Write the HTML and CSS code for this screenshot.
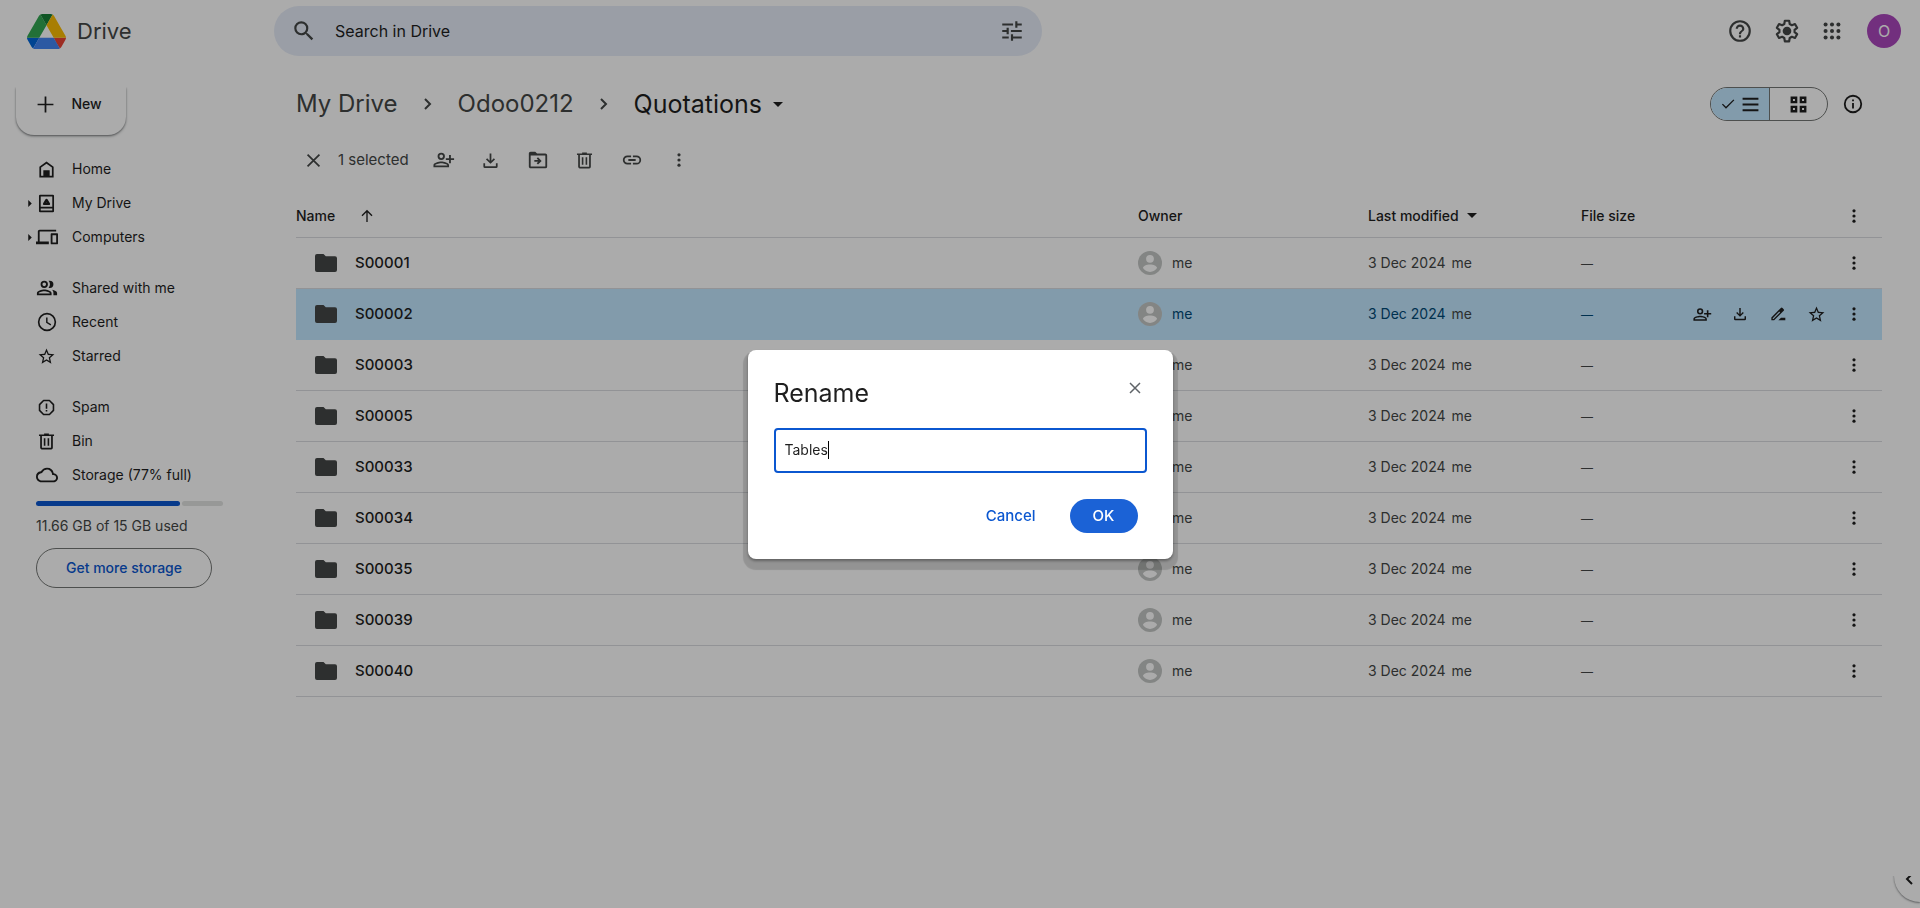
FILE: index.html
```html
<!DOCTYPE html>
<html lang="en">

<head>
    <meta charset="UTF-8">
    <meta name="viewport" content="width=device-width, initial-scale=1.0">
    <title>Quotations - Google Drive</title>
    <link rel="stylesheet" href="styles.css">
</head>

<body>
    <!-- Icon sprite -->
    <svg class="sprite" aria-hidden="true">
        <symbol id="i-search" viewBox="0 0 24 24"><path d="M15.5 14h-.79l-.28-.27A6.47 6.47 0 0 0 16 9.5 6.5 6.5 0 1 0 9.5 16c1.61 0 3.09-.59 4.23-1.57l.27.28v.79l5 4.99L20.49 19l-4.99-5zm-6 0a4.5 4.5 0 1 1 0-9 4.5 4.5 0 0 1 0 9z"/></symbol>
        <symbol id="i-tune" viewBox="0 0 24 24"><path d="M3 17v2h6v-2H3zM3 5v2h10V5H3zm10 16v-2h8v-2h-8v-2h-2v6h2zM7 9v2H3v2h4v2h2V9H7zm14 4v-2H11v2h10zm-6-4h2V7h4V5h-4V3h-2v6z"/></symbol>
        <symbol id="i-help" viewBox="0 0 24 24"><path d="M11 18h2v-2h-2v2zm1-16a10 10 0 1 0 0 20 10 10 0 0 0 0-20zm0 18a8 8 0 1 1 0-16 8 8 0 0 1 0 16zm0-14a4 4 0 0 0-4 4h2a2 2 0 1 1 4 0c0 2-3 1.750-3 5h2c0-2.250 3-2.500 3-5a4 4 0 0 0-4-4z"/></symbol>
        <symbol id="i-gear" viewBox="0 0 24 24"><path fill="none" stroke="currentColor" stroke-width="2" stroke-linejoin="round" d="M10 2.500h4l.5 3 2 1.150 2.850-1.050 2 3.450-2.350 1.900v2.100l2.350 1.900-2 3.450-2.850-1.050-2 1.150-.5 3h-4l-.5-3-2-1.150-2.850 1.050-2-3.450L5 13.050v-2.100L2.650 9.050l2-3.450L7.500 6.650l2-1.150z"/><circle cx="12" cy="12" r="4"/></symbol>
        <symbol id="i-apps" viewBox="0 0 24 24"><circle cx="5" cy="5" r="2.200"/><circle cx="12" cy="5" r="2.200"/><circle cx="19" cy="5" r="2.200"/><circle cx="5" cy="12" r="2.200"/><circle cx="12" cy="12" r="2.200"/><circle cx="19" cy="12" r="2.200"/><circle cx="5" cy="19" r="2.200"/><circle cx="12" cy="19" r="2.200"/><circle cx="19" cy="19" r="2.200"/></symbol>
        <symbol id="i-plus" viewBox="0 0 24 24"><path d="M10.900 2h2.200v8.900H22v2.200h-8.900V22h-2.200v-8.900H2v-2.200h8.900z"/></symbol>
        <symbol id="i-home" viewBox="0 0 24 24"><path fill-rule="evenodd" d="M12 2 3 8.500V22h18V8.500L12 2zM5.200 19.800V9.600L12 4.700l6.800 4.900v10.200H16V13H8v6.800z"/></symbol>
        <symbol id="i-drive" viewBox="0 0 24 24"><path fill-rule="evenodd" d="M4 1h16a1.500 1.500 0 0 1 1.500 1.500v19A1.500 1.500 0 0 1 20 23H4a1.500 1.500 0 0 1-1.500-1.500v-19A1.500 1.500 0 0 1 4 1zm.7 2.200v13h14.600v-13zm0 15.200v2.400h14.600v-2.400z"/><path fill="none" stroke="currentColor" stroke-width="3" stroke-linejoin="round" d="m12 7.500-3 5h6z"/></symbol>
        <symbol id="i-devices" viewBox="0 0 24 24"><path d="M4 6h18V4H4c-1.100 0-2 .9-2 2v11H0v3h14v-3H4V6zm19 2h-6c-.55 0-1 .45-1 1v10c0 .55.45 1 1 1h6c.55 0 1-.45 1-1V9c0-.55-.45-1-1-1zm-1 10h-4v-8h4v8z"/></symbol>
        <symbol id="i-people" viewBox="0 0 24 24"><path d="M9 12a4 4 0 1 0 0-8 4 4 0 0 0 0 8zm0-6a2 2 0 1 1 0 4 2 2 0 0 1 0-4zm0 7.500c-2.700 0-8 1.350-8 4V20h16v-2.500c0-2.650-5.300-4-8-4zM15 18H3v-.5c0-.7 3-2 6-2s6 1.300 6 2zM15 12a4 4 0 0 0 0-8c-.5 0-.9.080-1.300.2a6 6 0 0 1 0 7.600c.4.120.8.200 1.300.2zM17.500 13.900c1 .9 1.500 2 1.500 3.600V20h4v-2.500c0-2-2.700-3.100-5.500-3.600z"/></symbol>
        <symbol id="i-clock" viewBox="0 0 24 24"><path d="M12 2a10 10 0 1 0 0 20 10 10 0 0 0 0-20zm0 18.200a8.200 8.200 0 1 1 0-16.400 8.200 8.200 0 0 1 0 16.400zM12.600 7H11v5.800l4.800 3 .8-1.300-4-2.500z"/></symbol>
        <symbol id="i-star" viewBox="0 0 24 24"><path d="m22 9.240-7.190-.62L12 2 9.190 8.630 2 9.240l5.460 4.730L5.820 21 12 17.270 18.180 21l-1.630-7.030L22 9.240zM12 15.400l-3.760 2.270 1-4.280-3.320-2.880 4.380-.38L12 6.100l1.710 4.040 4.380.38-3.320 2.880 1 4.280L12 15.400z"/></symbol>
        <symbol id="i-spam" viewBox="0 0 24 24"><path fill="none" stroke="currentColor" stroke-width="2" stroke-linejoin="round" d="M8.300 3.200h7.400l5.100 5.100v7.400l-5.100 5.100H8.300l-5.100-5.100V8.300z"/><path d="M11 7h2v6.500h-2zM11 15h2v2h-2z"/></symbol>
        <symbol id="i-bin" viewBox="0 0 24 24"><path fill-rule="evenodd" d="M15 3V2H9v1H2.500v2.200H4V20c0 1.100.9 2 2 2h12a2 2 0 0 0 2-2V5.200h1.500V3zm2.800 16.800H6.200V5.200h11.600zM8.600 8h2v9.500h-2zm4.800 0h2v9.500h-2z"/></symbol>
        <symbol id="i-cloud" viewBox="0 0 24 24"><path d="M19.350 10.040A7.490 7.490 0 0 0 12 4C9.110 4 6.600 5.640 5.350 8.040A5.994 5.994 0 0 0 0 14c0 3.310 2.690 6 6 6h13c2.760 0 5-2.240 5-5 0-2.640-2.050-4.780-4.650-4.960zM19 18H6c-2.210 0-4-1.790-4-4 0-2.050 1.530-3.760 3.560-3.970l1.070-.11.5-.95A5.469 5.469 0 0 1 12 6c2.620 0 4.880 1.860 5.390 4.430l.3 1.500 1.530.11A2.980 2.980 0 0 1 22 15c0 1.650-1.350 3-3 3z"/></symbol>
        <symbol id="i-close" viewBox="0 0 24 24"><path fill="none" stroke="currentColor" stroke-width="2.200" d="m4.500 4.500 15 15m0-15-15 15"/></symbol>
        <symbol id="i-share" viewBox="0 0 24 24"><path d="M9 12a4 4 0 1 0 0-8 4 4 0 0 0 0 8zm0-6a2 2 0 1 1 0 4 2 2 0 0 1 0-4zm0 7.500c-2.700 0-8.500 1.350-8.500 4V20h17v-2.500c0-2.650-5.800-4-8.500-4zM15.500 18h-13v-.5c0-.7 3.500-2 6.500-2s6.500 1.300 6.500 2zM19.500 10V6.500h-2V10H14v2h3.500v3.500h2V12H23v-2z"/></symbol>
        <symbol id="i-download" viewBox="0 0 24 24"><path d="M10.900 3h2.200v9.200l3.100-3.100 1.500 1.500L12 16.200l-5.700-5.600 1.500-1.500 3.100 3.100zM3 15.500h2.200v3.800h13.600v-3.800H21V19.500a2 2 0 0 1-2 2H5a2 2 0 0 1-2-2z"/></symbol>
        <symbol id="i-move" viewBox="0 0 24 24"><path fill-rule="evenodd" d="M20 5h-9L9 3H4c-1.100 0-2 .9-2 2v14c0 1.100.9 2 2 2h16a2 2 0 0 0 2-2V7a2 2 0 0 0-2-2zm0 14H4V7h16zm-8-2 4-4-4-4-1.400 1.400 1.600 1.600H8v2h4.200l-1.600 1.600z"/></symbol>
        <symbol id="i-link" viewBox="0 0 24 24"><path d="M3.900 12c0-1.710 1.390-3.100 3.100-3.100h4V7H7a5 5 0 0 0 0 10h4v-1.900H7c-1.710 0-3.100-1.390-3.100-3.100zM8 13h8v-2H8v2zm9-6h-4v1.900h4a3.100 3.100 0 0 1 0 6.200h-4V17h4a5 5 0 0 0 0-10z"/></symbol>
        <symbol id="i-more" viewBox="0 0 24 24"><circle cx="12" cy="4.200" r="2.400"/><circle cx="12" cy="12" r="2.400"/><circle cx="12" cy="19.800" r="2.400"/></symbol>
        <symbol id="i-edit" viewBox="0 0 24 24"><path fill-rule="evenodd" d="M2 17.250V21.500h4.200L20.500 7.200a1.800 1.800 0 0 0 0-2.500l-1.700-1.700a1.800 1.800 0 0 0-2.500 0zM5.300 19.400H4.100v-1.200l9.800-9.800 1.200 1.200z"/><path d="m12.500 21.500 4-4H23v4z"/></symbol>
        <symbol id="i-up" viewBox="0 0 24 24"><path fill="none" stroke="currentColor" stroke-width="2" d="M12 21V4M4.500 11.500 12 4l7.500 7.500"/></symbol>
        <symbol id="i-caret" viewBox="0 0 10 5"><path d="M0 0h10L5 5z"/></symbol>
        <symbol id="i-expand" viewBox="0 0 5 10"><path d="M0 0v10l5-5z"/></symbol>
        <symbol id="i-chevron" viewBox="0 0 8 12"><path fill="none" stroke="currentColor" stroke-width="2" d="m1 1 5 5-5 5"/></symbol>
        <symbol id="i-chevron-left" viewBox="0 0 8 12"><path fill="none" stroke="currentColor" stroke-width="2" d="M7 1 2 6l5 5"/></symbol>
        <symbol id="i-check" viewBox="0 0 24 24"><path d="M9 16.200 4.300 11.500 2.900 12.900 9 19 21.500 6.500 20.100 5.100z"/></symbol>
        <symbol id="i-list" viewBox="0 0 24 24"><path d="M2 3.500h20v2.500H2zM2 10.750h20v2.500H2zM2 18h20v2.500H2z"/></symbol>
        <symbol id="i-grid" viewBox="0 0 24 24"><path fill-rule="evenodd" d="M2 2h8.500v8.500H2zm3 3v2.500h2.500V5zM13.500 2H22v8.500h-8.500zm3 3v2.500H19V5zM2 13.500h8.500V22H2zm3 3V19h2.500v-2.500zM13.500 13.500H22V22h-8.500zm3 3V19H19v-2.500z"/></symbol>
        <symbol id="i-info" viewBox="0 0 24 24"><path d="M11 7h2v2h-2zm0 4h2v6h-2zm1-9a10 10 0 1 0 0 20 10 10 0 0 0 0-20zm0 18a8 8 0 1 1 0-16 8 8 0 0 1 0 16z"/></symbol>
        <symbol id="i-folder" viewBox="0 0 22 18"><path d="M2 0h6.500l2.300 2.300H20a2 2 0 0 1 2 2V16a2 2 0 0 1-2 2H2a2 2 0 0 1-2-2V2a2 2 0 0 1 2-2z"/></symbol>
        <symbol id="i-user" viewBox="0 0 24 24"><circle cx="12" cy="12" r="12" fill="#c4c7c5"/><circle cx="12" cy="7.800" r="3.900" fill="#fff"/><path fill="#fff" d="M12 13.600c-3.600 0-7 1.600-7 3.500 1.400 2.300 4 3.900 7 3.900s5.600-1.600 7-3.900c0-1.900-3.400-3.500-7-3.500z"/></symbol>
    </svg>

    <!-- Top bar -->
    <header class="topbar">
        <a class="brand" href="#">
            <svg class="logo" viewBox="0 0 87.3 78" aria-hidden="true">
                <path d="m6.600 66.850 3.850 6.650c.8 1.400 1.950 2.500 3.300 3.300L27.500 53H0c0 1.550.4 3.100 1.200 4.500z" fill="#0066da"/>
                <path d="M43.650 25 29.900 1.200c-1.350.8-2.500 1.900-3.300 3.300l-25.400 44A9.060 9.060 0 0 0 0 53h27.500z" fill="#34a853"/>
                <path d="M73.550 76.800c1.350-.8 2.500-1.900 3.300-3.300l1.600-2.750L86.100 57.500c.8-1.400 1.200-2.950 1.200-4.500H59.800l5.850 11.500z" fill="#ea4335"/>
                <path d="M43.650 25 57.400 1.200C56.050.4 54.500 0 52.900 0H34.400c-1.600 0-3.150.45-4.500 1.200z" fill="#188038"/>
                <path d="M59.800 53H27.500L13.750 76.800c1.350.8 2.900 1.200 4.500 1.200h50.800c1.600 0 3.150-.45 4.500-1.200z" fill="#4285f4"/>
                <path d="M73.400 26.500 60.700 4.500c-.8-1.400-1.950-2.500-3.300-3.300L43.650 25 59.800 53h27.450c0-1.550-.4-3.100-1.200-4.500z" fill="#fbbc04"/>
            </svg>
            <span>Drive</span>
        </a>
        <form class="search">
            <button type="button" aria-label="Search"><svg class="icon-xl"><use href="#i-search"/></svg></button>
            <input type="text" placeholder="Search in Drive" aria-label="Search in Drive">
            <button type="button" aria-label="Advanced search"><svg class="icon-xl"><use href="#i-tune"/></svg></button>
        </form>
        <div class="account">
            <button aria-label="Help"><svg class="icon-xl"><use href="#i-help"/></svg></button>
            <button aria-label="Settings"><svg class="icon-xl"><use href="#i-gear"/></svg></button>
            <button aria-label="Google apps"><svg class="icon-lg"><use href="#i-apps"/></svg></button>
            <button class="avatar" aria-label="Account">O</button>
        </div>
    </header>

    <div class="layout">
        <!-- Sidebar -->
        <aside class="sidebar">
            <button class="new-btn"><svg class="icon"><use href="#i-plus"/></svg>New</button>
            <nav>
                <ul class="nav-group">
                    <li><a href="#"><span class="expand"></span><svg class="icon"><use href="#i-home"/></svg>Home</a></li>
                    <li><a href="#"><span class="expand"><svg><use href="#i-expand"/></svg></span><svg class="icon"><use href="#i-drive"/></svg>My Drive</a></li>
                    <li><a href="#"><span class="expand"><svg><use href="#i-expand"/></svg></span><svg class="icon-lg"><use href="#i-devices"/></svg>Computers</a></li>
                </ul>
                <ul class="nav-group">
                    <li><a href="#"><span class="expand"></span><svg class="icon-lg"><use href="#i-people"/></svg>Shared with me</a></li>
                    <li><a href="#"><span class="expand"></span><svg class="icon-lg"><use href="#i-clock"/></svg>Recent</a></li>
                    <li><a href="#"><span class="expand"></span><svg class="icon"><use href="#i-star"/></svg>Starred</a></li>
                </ul>
                <ul class="nav-group">
                    <li><a href="#"><span class="expand"></span><svg class="icon"><use href="#i-spam"/></svg>Spam</a></li>
                    <li><a href="#"><span class="expand"></span><svg class="icon"><use href="#i-bin"/></svg>Bin</a></li>
                    <li><a href="#"><span class="expand"></span><svg class="icon-lg"><use href="#i-cloud"/></svg>Storage (77% full)</a></li>
                </ul>
            </nav>
            <div class="storage">
                <div class="meter"><span class="used" style="width: 77%"></span><span class="free"></span></div>
                <p>11.66 GB of 15 GB used</p>
                <button class="storage-btn">Get more storage</button>
            </div>
        </aside>

        <!-- Folder contents -->
        <main class="content">
            <div class="path-row">
                <nav class="breadcrumb" aria-label="Breadcrumb">
                    <a href="#">My Drive</a>
                    <svg class="chevron"><use href="#i-chevron"/></svg>
                    <a href="#">Odoo0212</a>
                    <svg class="chevron"><use href="#i-chevron"/></svg>
                    <button class="current">Quotations<svg class="caret"><use href="#i-caret"/></svg></button>
                </nav>
                <div class="view-options">
                    <div class="toggle">
                        <button class="active" aria-label="List layout"><svg class="icon-sm"><use href="#i-check"/></svg><svg class="icon"><use href="#i-list"/></svg></button>
                        <button aria-label="Grid layout"><svg class="icon"><use href="#i-grid"/></svg></button>
                    </div>
                    <button aria-label="View details"><svg class="icon-lg"><use href="#i-info"/></svg></button>
                </div>
            </div>

            <div class="toolbar">
                <button aria-label="Clear selection"><svg class="icon"><use href="#i-close"/></svg></button>
                <span class="count">1 selected</span>
                <button aria-label="Share"><svg class="icon-lg"><use href="#i-share"/></svg></button>
                <button aria-label="Download"><svg class="icon"><use href="#i-download"/></svg></button>
                <button aria-label="Move"><svg class="icon-lg"><use href="#i-move"/></svg></button>
                <button aria-label="Move to bin"><svg class="icon"><use href="#i-bin"/></svg></button>
                <button aria-label="Copy link"><svg class="icon-lg"><use href="#i-link"/></svg></button>
                <button aria-label="More actions"><svg class="icon-sm"><use href="#i-more"/></svg></button>
            </div>

            <table class="files">
                <colgroup>
                    <col>
                    <col class="col-owner">
                    <col class="col-modified">
                    <col class="col-size">
                    <col class="col-actions">
                </colgroup>
                <thead>
                    <tr>
                        <th><div class="cell">Name<svg class="icon-sm sort"><use href="#i-up"/></svg></div></th>
                        <th>Owner</th>
                        <th><div class="cell">Last modified<svg class="caret"><use href="#i-caret"/></svg></div></th>
                        <th>File size</th>
                        <th><div class="actions"><button aria-label="More sorting options"><svg class="icon-sm"><use href="#i-more"/></svg></button></div></th>
                    </tr>
                </thead>
                <tbody id="fileRows"></tbody>
            </table>
        </main>
    </div>

    <!-- Side panel handle -->
    <button class="panel-tab" aria-label="Show side panel"><svg class="chevron"><use href="#i-chevron-left"/></svg></button>

    <!-- Rename dialog -->
    <div class="scrim">
        <div class="dialog" role="dialog" aria-labelledby="renameTitle">
            <div class="dialog-head">
                <h2 id="renameTitle">Rename</h2>
                <button class="dialog-close" aria-label="Close"><svg class="icon-sm"><use href="#i-close"/></svg></button>
            </div>
            <label class="field"><input type="text" value="Tables" aria-label="New name"><span class="cursor"></span></label>
            <div class="dialog-actions">
                <button class="cancel">Cancel</button>
                <button class="ok">OK</button>
            </div>
        </div>
    </div>

    <script>
        const folders = ['S00001', 'S00002', 'S00003', 'S00005', 'S00033', 'S00034', 'S00035', 'S00039', 'S00040'];
        const selected = 'S00002';

        const button = (label, icon, size) =>
            `<button aria-label="${label}"><svg class="${size}"><use href="#${icon}"/></svg></button>`;

        // Quick actions only show on the selected row
        const quickActions = button('Share', 'i-share', 'icon') + button('Download', 'i-download', 'icon-sm') +
            button('Rename', 'i-edit', 'icon-sm') + button('Add to starred', 'i-star', 'icon');

        document.getElementById('fileRows').innerHTML = folders.map(name => `
            <tr class="${name === selected ? 'selected' : ''}">
                <td><div class="cell name"><svg class="folder"><use href="#i-folder"/></svg>${name}</div></td>
                <td><div class="cell owner"><svg class="user"><use href="#i-user"/></svg>me</div></td>
                <td><div class="cell modified">3 Dec 2024 <span>me</span></div></td>
                <td><span class="dash">—</span></td>
                <td><div class="actions">${name === selected ? quickActions : ''}${button('More actions', 'i-more', 'icon-sm')}</div></td>
            </tr>`).join('');
    </script>
</body>

</html>
```

FILE: styles.css
```css
/* General Styling */
* {
    box-sizing: border-box;
}

body {
    margin: 0;
    min-height: 100vh;
    font-family: 'Inter', 'Roboto', sans-serif;
    font-size: 15px;
    line-height: 20px;
    color: #1f1f1f;
    background-color: #fff;
    overflow: hidden;
}

a {
    color: inherit;
    text-decoration: none;
}

button {
    display: flex;
    align-items: center;
    justify-content: center;
    padding: 0;
    border: none;
    background: none;
    font: inherit;
    color: inherit;
    cursor: pointer;
}

svg {
    display: block;
    flex: none;
    fill: currentColor;
}

.sprite {
    display: none;
}

.icon-sm {
    width: 16px;
    height: 16px;
}

.icon {
    width: 19px;
    height: 19px;
}

.icon-lg {
    width: 22px;
    height: 22px;
}

.icon-xl {
    width: 26px;
    height: 26px;
}

.caret {
    width: 10px;
    height: 5px;
}

.chevron {
    width: 8px;
    height: 12px;
}

/* Top Bar */
.topbar {
    display: flex;
    align-items: center;
    height: 62px;
    padding-right: 19px;
}

.brand {
    display: flex;
    align-items: center;
    gap: 11px;
    width: 274px;
    padding-left: 27px;
    font-size: 22px;
    color: #444746;
}

.logo {
    width: 39px;
    height: 35px;
}

.search {
    display: flex;
    align-items: center;
    gap: 18px;
    flex: 0 1 768px;
    height: 50px;
    padding: 0 17px;
    border-radius: 25px;
    background-color: #e6ecf8;
    color: #444746;
}

.search input {
    flex: 1;
    min-width: 0;
    padding: 0;
    border: none;
    outline: none;
    background: none;
    font: inherit;
    font-size: 16px;
}

.search input::placeholder {
    color: #1f1f1f;
    opacity: 1;
}

.account {
    display: flex;
    align-items: center;
    gap: 21px;
    margin-left: auto;
    color: #444746;
}

.avatar {
    width: 34px;
    height: 34px;
    margin-left: 3px;
    border-radius: 50%;
    background-color: #ab47bc;
    color: #fff;
    font-size: 16px;
}

/* Sidebar */
.layout {
    display: flex;
    padding-top: 25px;
}

.sidebar {
    flex: none;
    width: 296px;
    padding-left: 16px;
}

.new-btn {
    gap: 16px;
    width: 110px;
    height: 48px;
    padding: 0 4px 14px 0;
    border-radius: 0 0 18px 18px;
    box-shadow: 0 1px 2px rgba(60, 64, 67, 0.6), 0 2px 3px rgba(60, 64, 67, 0.15);
    clip-path: inset(0 -4px -6px -4px);
    font-size: 14px;
    font-weight: 500;
}

.nav-group {
    margin: 17px 0 0;
    padding: 0;
    list-style: none;
}

.nav-group a {
    display: flex;
    align-items: center;
    height: 34px;
    font-size: 14px;
}

.nav-group .icon {
    margin: 0 16px 0 1px;
}

.nav-group .icon-lg {
    margin-right: 14px;
}

.expand {
    width: 20px;
    padding-left: 12px;
}

.expand svg {
    width: 4px;
    height: 7px;
}

.storage {
    width: 207px;
    padding: 9px 0 0 20px;
}

.meter {
    display: flex;
    gap: 2px;
    height: 5px;
}

.meter span {
    border-radius: 3px;
}

.used {
    background-color: #0b57d0;
}

.free {
    flex: 1;
    background-color: #e1e3e1;
}

.storage p {
    margin: 10px 0 12px;
    color: #444746;
    font-size: 14px;
    white-space: nowrap;
}

.storage-btn {
    width: 176px;
    height: 40px;
    border: 1px solid #747775;
    border-radius: 20px;
    color: #0b57d0;
    font-size: 14px;
    font-weight: 500;
}

/* Content */
.content {
    flex: 1;
    min-width: 0;
    padding-right: 38px;
}

.path-row {
    display: flex;
    align-items: center;
    justify-content: space-between;
    height: 34px;
}

.breadcrumb {
    display: flex;
    align-items: center;
    gap: 26px;
    font-size: 24px;
    color: #444746;
}

.current {
    gap: 11px;
    color: #1f1f1f;
    font-size: 25px;
}

.view-options {
    display: flex;
    align-items: center;
    gap: 14px;
    padding-right: 18px;
}

.toggle {
    display: flex;
    width: 118px;
    height: 34px;
    border: 1px solid #747775;
    border-radius: 17px;
    overflow: hidden;
}

.toggle button {
    flex: 1;
    gap: 5px;
}

.toggle .active {
    background-color: #c2e7ff;
    border-right: 1px solid #747775;
}

/* Selection Toolbar */
.toolbar {
    display: flex;
    align-items: center;
    height: 40px;
    margin-top: 19px;
    color: #444746;
}

.toolbar button {
    width: 47px;
    height: 40px;
}

.toolbar button:first-child {
    width: 34px;
}

.count {
    width: 90px;
    padding-left: 8px;
}

/* File Table */
.files {
    width: 100%;
    margin-top: 14px;
    border-collapse: separate;
    border-spacing: 0;
    table-layout: fixed;
    font-size: 14px;
    color: #444746;
}

.col-owner {
    width: 230px;
}

.col-modified {
    width: 213px;
}

.col-size {
    width: 100px;
}

.col-actions {
    width: 201px;
}

.files th {
    height: 44px;
    padding: 0;
    border-bottom: 1px solid #dadce0;
    text-align: left;
    font-weight: 500;
    color: #1f1f1f;
}

.files td {
    height: 51px;
    padding: 0;
    border-bottom: 1px solid #dadce0;
}

.cell {
    display: flex;
    align-items: center;
    gap: 8px;
}

.sort {
    margin-left: 16px;
}

.name {
    gap: 18px;
    padding-left: 19px;
    font-size: 15px;
    font-weight: 500;
    color: #1f1f1f;
}

.owner {
    gap: 10px;
}

.folder {
    width: 22px;
    height: 18px;
    color: #444746;
}

.user {
    width: 24px;
    height: 24px;
}

.selected td {
    background-color: #c2e7ff;
    border-color: #c2e7ff;
    color: #004a77;
}

.modified {
    gap: 6px;
}

.modified span {
    color: #444746;
}

.dash {
    font-size: 12px;
}

.actions {
    display: flex;
    justify-content: flex-end;
    padding-right: 9px;
    color: #1f1f1f;
}

.actions button {
    width: 38px;
    height: 38px;
}

/* Side Panel Handle */
.panel-tab {
    position: fixed;
    right: 0;
    bottom: 6px;
    width: 26px;
    height: 46px;
    padding-left: 4px;
    border-radius: 0 0 0 26px;
    background-color: #fff;
    box-shadow: 0 1px 2px rgba(60, 64, 67, 0.6);
    clip-path: inset(20px 0 -4px -4px);
}

/* Rename Dialog */
.scrim {
    position: fixed;
    inset: 0;
    display: flex;
    align-items: center;
    justify-content: center;
    background-color: rgba(0, 0, 0, 0.33);
}

.dialog {
    width: 425px;
    padding: 26px;
    border-radius: 8px;
    background-color: #fff;
    box-shadow: 0 2px 3px rgba(0, 0, 0, 0.35), 0 6px 1px 5px rgba(0, 0, 0, 0.14);
}

.dialog-head {
    display: flex;
    justify-content: space-between;
    height: 52px;
}

.dialog h2 {
    margin: 0;
    font-size: 25px;
    font-weight: 400;
    line-height: 34px;
}

.dialog-close {
    width: 24px;
    height: 24px;
    color: #5f6368;
}

.field {
    display: flex;
    align-items: center;
    height: 45px;
    padding: 0 9px;
    border: 2px solid #0b57d0;
    border-radius: 4px;
}

.field input {
    field-sizing: content;
    padding: 0;
    border: none;
    outline: none;
    font: inherit;
    font-size: 14px;
    color: inherit;
}

.cursor {
    width: 1px;
    height: 18px;
    background-color: #000;
}

.dialog-actions {
    display: flex;
    justify-content: flex-end;
    gap: 10px;
    margin-top: 26px;
    padding-right: 9px;
}

.dialog-actions button {
    height: 34px;
    border-radius: 17px;
    font-weight: 500;
}

.cancel {
    padding: 0 24px;
    color: #0b57d0;
}

.ok {
    width: 68px;
    background-color: #1b62d6;
}

.dialog .ok {
    color: #fff;
}
```
